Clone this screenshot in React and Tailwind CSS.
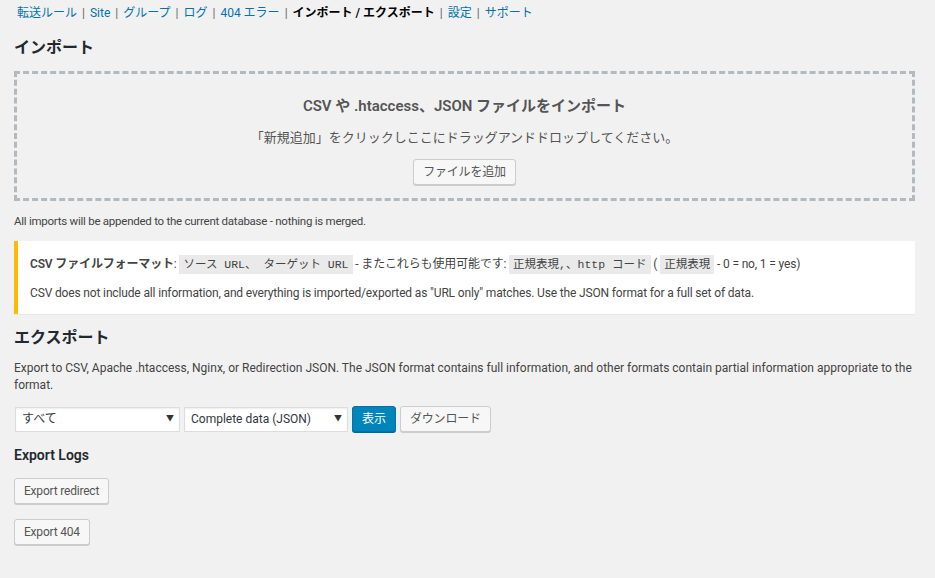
const font = { fontFamily: 'Roboto, "Noto Sans CJK JP", sans-serif' };

const navItems = [
  { label: '転送ルール' },
  { label: 'Site' },
  { label: 'グループ' },
  { label: 'ログ' },
  { label: '404 エラー' },
  { label: 'インポート / エクスポート', current: true },
  { label: '設定' },
  { label: 'サポート' },
];

function Button({ children, className = '' }) {
  return (
    <button className={`h-[26px] px-[9px] text-[12px] leading-[24px] tracking-[-0.2px] text-[#555] bg-[#f7f7f7] border border-[#ccc] rounded-[3px] shadow-[0_1px_0_#ccc] ${className}`}>
      {children}
    </button>
  );
}

function Code({ children }) {
  return <code className="bg-[#eaeaea] px-[4px] py-[3px] text-[11.5px] tracking-normal font-['Liberation_Mono','Noto_Sans_CJK_JP',monospace]">{children}</code>;
}

function Select({ value, width }) {
  return (
    <div className={`${width} h-[25px] bg-white border border-[#ddd] shadow-[inset_0_1px_2px_rgba(0,0,0,0.07)] flex items-center justify-between pl-[6px] pr-[5px] text-[12px] text-[#32373c]`}>
      <span>{value}</span>
      <span className="text-[8px] text-[#333]">▼</span>
    </div>
  );
}

export default function App() {
  return (
    <div className="min-h-[578px] w-[935px] bg-[#f1f1f1] text-[#444] text-[12px]" style={font}>
      <div className="pl-[14px] pr-[20px] pt-[4px]">
        <ul className="flex items-center text-[12px] leading-[18px] text-[#666] pl-[3px]">
          {navItems.map((item, i) => (
            <li key={item.label} className="flex items-center">
              {i > 0 && <span className="px-[5px] text-[#666]">|</span>}
              <span className={item.current ? 'font-semibold text-black' : 'text-[#0073aa]'}>{item.label}</span>
            </li>
          ))}
        </ul>

        <h2 className="mt-[16px] text-[16px] font-semibold text-[#23282d] leading-[20px]">インポート</h2>

        <div className="mt-[13px] h-[130px] border-[3px] border-dashed border-[#b4b9be] flex flex-col items-center pt-[21px]">
          <h3 className="text-[15px] font-semibold text-[#555] leading-[22px]">CSV や .htaccess、JSON ファイルをインポート</h3>
          <p className="mt-[11px] text-[13px] text-[#555] leading-[20px]">「新規追加」をクリックしここにドラッグアンドドロップしてください。</p>
          <Button className="mt-[11px]">ファイルを追加</Button>
        </div>

        <p className="mt-[11px] text-[11.5px] leading-[18px] tracking-[-0.25px]">All imports will be appended to the current database - nothing is merged.</p>

        <div className="mt-[11px] bg-white border-l-4 border-[#ffb900] shadow-[0_1px_1px_rgba(0,0,0,0.04)] pl-[12px] pr-[12px] pt-[9px] pb-[7px] tracking-[-0.15px]">
          <p className="text-[12px] leading-[22px] py-[3px]">
            <strong className="font-semibold">CSV ファイルフォーマット</strong>: <Code>ソース URL、 ターゲット URL</Code> - またこれらも使用可能です: <Code>正規表現,、http コード</Code> ( <Code>正規表現</Code> - 0 = no, 1 = yes)
          </p>
          <p className="text-[12px] leading-[22px] py-[3px]">CSV does not include all information, and everything is imported/exported as "URL only" matches. Use the JSON format for a full set of data.</p>
        </div>

        <h2 className="mt-[14px] text-[16px] font-semibold text-[#23282d] leading-[20px]">エクスポート</h2>
        <p className="mt-[12px] text-[12px] leading-[17px]">Export to CSV, Apache .htaccess, Nginx, or Redirection JSON. The JSON format contains full information, and other formats contain partial information appropriate to the format.</p>

        <div className="mt-[12px] flex items-center gap-[4px] pl-[1px]">
          <Select value="すべて" width="w-[165px]" />
          <Select value="Complete data (JSON)" width="w-[164px]" />
          <button className="h-[26px] px-[9px] text-[12px] text-white bg-[#0085ba] border border-[#0073aa] rounded-[3px] shadow-[0_1px_0_#006799]">表示</button>
          <Button>ダウンロード</Button>
        </div>

        <h3 className="mt-[13px] text-[14px] font-semibold text-[#23282d] leading-[20px]">Export Logs</h3>
        <div className="mt-[13px]"><Button>Export redirect</Button></div>
        <div className="mt-[15px]"><Button>Export 404</Button></div>
      </div>
    </div>
  );
}
